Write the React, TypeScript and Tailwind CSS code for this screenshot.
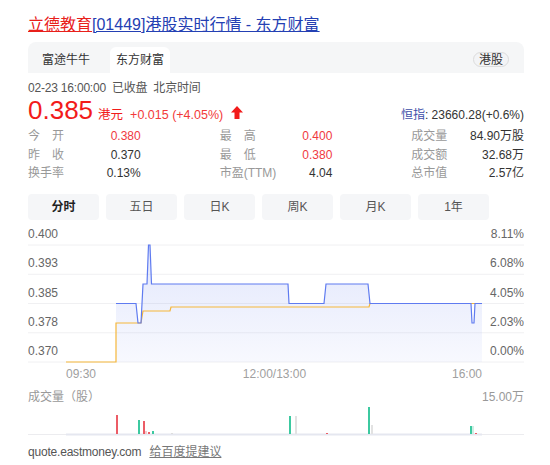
// =====================
// library imports
import React from 'react';

// =====================
// data
const stats: { label: string; value: string; red?: boolean }[][] = [
  [
    { label: '今\u3000开', value: '0.380', red: true },
    { label: '最\u3000高', value: '0.400', red: true },
    { label: '成交量', value: '84.90万股' },
  ],
  [
    { label: '昨\u3000收', value: '0.370' },
    { label: '最\u3000低', value: '0.380', red: true },
    { label: '成交额', value: '32.68万' },
  ],
  [
    { label: '换手率', value: '0.13%' },
    { label: '市盈(TTM)', value: '4.04' },
    { label: '总市值', value: '2.57亿' },
  ],
];

const periods = ['分时', '五日', '日K', '周K', '月K', '1年'];

// price axis: label, percent, y
const gridLines = [
  { price: '0.400', pct: '8.11%', y: 21 },
  { price: '0.393', pct: '6.08%', y: 50.25 },
  { price: '0.385', pct: '4.05%', y: 79.5 },
  { price: '0.378', pct: '2.03%', y: 108.75 },
  { price: '0.370', pct: '0.00%', y: 138 },
];

const pricePath =
  'M88 79.5 H108 L110 99 H113 L115 60 H119 L120.5 21 H122 L123.5 60 H260 L261 79.5 H296 L298 60 H340 L342 79.5 H443 L444 99 H446 L447 79.5 H454';
const avgPath = 'M38 138 H88 V99 H113 L115 87 H142 L143 83 H341 L342 79.5 H454';

// volume bars: x, top, colour
const bars: [number, number, string][] = [
  [88, 10, '#ec5c66'],
  [110, 15, '#3cc9a0'],
  [115, 16, '#ec5c66'],
  [117, 26, '#f6c9cc'],
  [120, 27, '#ec5c66'],
  [124, 26, '#3cc9a0'],
  [143, 28, '#dddddd'],
  [261, 11, '#3cc9a0'],
  [267, 11, '#e2e2e2'],
  [298, 28, '#ec5c66'],
  [340, 2, '#3cc9a0'],
  [343, 20, '#e2e2e2'],
  [442, 21, '#3cc9a0'],
  [444, 21, '#cfeee4'],
  [447, 28, '#ec5c66'],
];

// =====================
// Price chart (drawing)
function PriceChart() {
  return (
    <svg width={496} height={160} className="block mt-[4px]">
      <defs>
        <linearGradient id="fill" x1="0" y1="0" x2="0" y2="1">
          <stop offset="0%" stopColor="#6d86ef" stopOpacity={0.2} />
          <stop offset="100%" stopColor="#6d86ef" stopOpacity={0.05} />
        </linearGradient>
      </defs>
      {gridLines.map((g) => (
        <g key={g.price}>
          <line x1={0} x2={496} y1={g.y} y2={g.y} stroke="#f0f0f2" strokeWidth={1} />
          <text x={0} y={g.y - 7} fontSize={12} fill="#666">
            {g.price}
          </text>
          <text x={496} y={g.y - 7} fontSize={12} fill="#666" textAnchor="end">
            {g.pct}
          </text>
        </g>
      ))}
      <path d={pricePath + ' L454 138 H88 Z'} fill="url(#fill)" />
      <path d={avgPath} fill="none" stroke="#f5b73b" strokeWidth={1.2} />
      <path d={pricePath} fill="none" stroke="#5f7bf0" strokeWidth={1.2} />
      <text x={38} y={154} fontSize={12} fill="#a0a0a0">09:30</text>
      <text x={246.5} y={154} fontSize={12} fill="#a0a0a0" textAnchor="middle">12:00/13:00</text>
      <text x={454} y={154} fontSize={12} fill="#a0a0a0" textAnchor="end">16:00</text>
    </svg>
  );
}

// =====================
// Volume chart (drawing)
function VolumeChart() {
  return (
    <svg width={496} height={32} className="block">
      <line x1={0} x2={496} y1={29.5} y2={29.5} stroke="#ececef" strokeWidth={1} />
      <rect x={38} y={28.5} width={416} height={2} fill="#e5e7f0" />
      {bars.map(([x, top, c], i) => (
        <rect key={i} x={x} y={top} width={2} height={29 - top} fill={c} />
      ))}
    </svg>
  );
}

// =====================
// Up arrow
function UpArrow() {
  return (
    <svg width={12} height={13} viewBox="0 0 12 13" className="ml-[8px] self-center mt-[4px]">
      <path d="M6 0 L12 6.5 H8.5 V13 H3.5 V6.5 H0 Z" fill="#f21b1b" />
    </svg>
  );
}

// =====================
// App Root
export default function App() {
  return (
    <div className="w-[550px] h-[465px] bg-white overflow-hidden font-['Liberation_Sans','Noto_Sans_CJK_SC',sans-serif] text-[12px] text-[#333]">
      <div className="ml-[28px] w-[496px] pt-[14px]">
        {/* title */}
        <div className="h-[22px] leading-[22px] text-[16px] whitespace-nowrap">
          <a className="text-[#e8201b] underline">立德教育</a>
          <a className="text-[#2440b3] underline">[01449]港股实时行情 - 东方财富</a>
        </div>

        {/* source tabs */}
        <div className="mt-[6px] h-[31px] bg-[#f5f6f7] rounded-t-[8px] flex items-end pl-[8px] pr-[15px]">
          <div className="w-[60px] h-[26px] flex items-center justify-center text-[#333]">富途牛牛</div>
          <div className="ml-[14px] w-[60px] h-[26px] flex items-center justify-center bg-white rounded-t-[6px] text-[#333]">
            东方财富
          </div>
          <div className="ml-auto mb-[6px] h-[15px] px-[5px] flex items-center rounded-full border border-[#dcdcdc] bg-[#f3f4f6] text-[12px] leading-none text-[#333]">
            港股
          </div>
        </div>

        {/* time */}
        <div className="mt-[7px] h-[16px] leading-[16px] text-[#555] whitespace-nowrap tracking-[-0.2px]">
          02-23 16:00:00<span className="ml-[6px]">已收盘</span>
          <span className="ml-[6px]">北京时间</span>
        </div>

        {/* price */}
        <div className="mt-[1px] h-[26px] flex items-baseline whitespace-nowrap">
          <span className="text-[26px] leading-[26px] text-[#f21b1b]">0.385</span>
          <span className="ml-[5px] text-[12.5px] text-[#f21b1b]">港元</span>
          <span className="ml-[7px] text-[12.5px] text-[#f23a3a]">+0.015 (+4.05%)</span>
          <UpArrow />
          <span className="ml-auto text-[12px]">
            <span className="text-[#3d4ea8]">恒指</span>
            <span className="text-[#333]">: 23660.28(+0.6%)</span>
          </span>
        </div>

        {/* stats */}
        <div className="mt-[4px]">
          {stats.map((row, r) => (
            <div key={r} className="h-[18.5px] grid grid-cols-3 gap-x-[79px] items-center">
              {row.map((s) => (
                <div key={s.label} className="flex justify-between whitespace-nowrap">
                  <span className="text-[#999]">{s.label}</span>
                  <span className={s.red ? 'text-[#f0393f]' : 'text-[#333]'}>{s.value}</span>
                </div>
              ))}
            </div>
          ))}
        </div>

        {/* periods */}
        <div className="mt-[11.5px] flex gap-[7px]">
          {periods.map((p, i) => (
            <div
              key={p}
              className={
                'w-[71px] h-[26px] flex items-center justify-center rounded-[4px] bg-[#f5f6f8] ' +
                (i === 0 ? 'font-bold text-[#222]' : 'text-[#555]')
              }
            >
              {p}
            </div>
          ))}
        </div>

        <PriceChart />

        {/* volume */}
        <div className="mt-[5px] h-[16px] leading-[16px] flex justify-between text-[#999]">
          <span>成交量（股）</span>
          <span>15.00万</span>
        </div>
        <VolumeChart />

        {/* footer */}
        <div className="mt-[7px] h-[16px] leading-[16px] flex whitespace-nowrap">
          <span className="text-[#555] tracking-[-0.2px]">quote.eastmoney.com</span>
          <a className="ml-[8px] text-[#777] underline">给百度提建议</a>
        </div>
      </div>
    </div>
  );
}
